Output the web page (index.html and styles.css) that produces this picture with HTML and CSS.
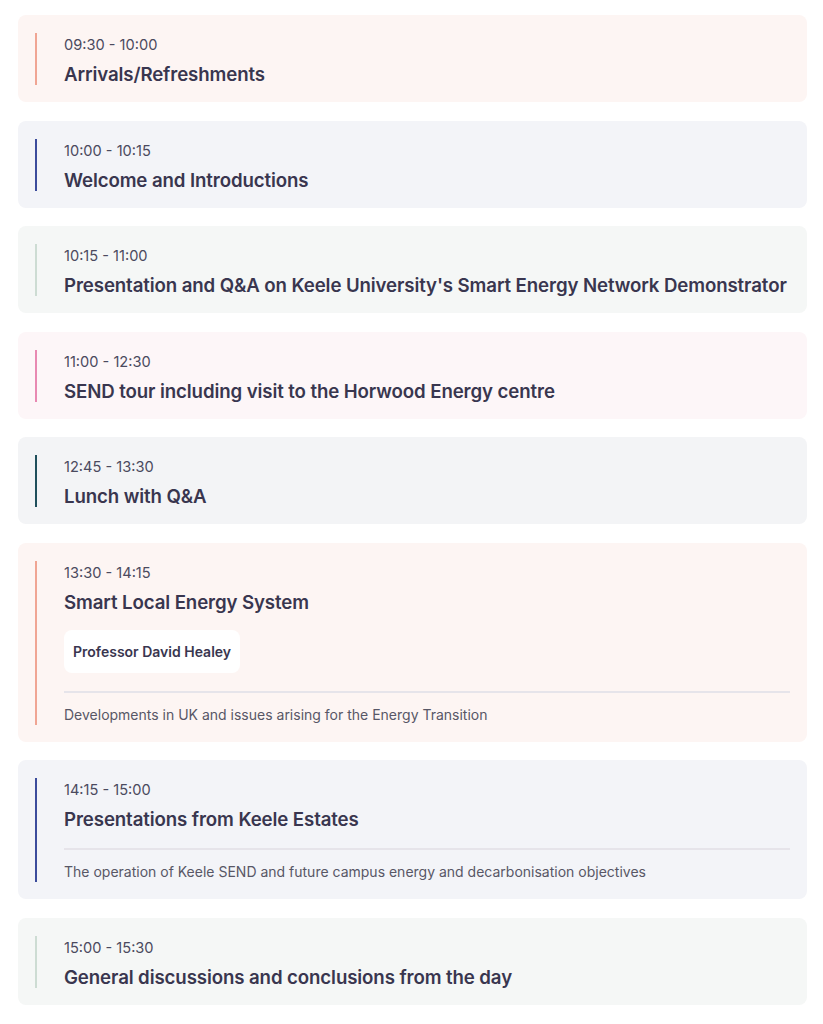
FILE: index.html
```html
<!DOCTYPE html>
<html lang="en">
<head>
<meta charset="utf-8">
<title>Agenda</title>
<link rel="stylesheet" href="styles.css">
</head>
<body>
<main class="agenda">
  <section class="slot slot--salmon">
    <div class="slot__inner">
      <p class="slot__time">09:30 - 10:00</p>
      <h3 class="slot__title">Arrivals/Refreshments</h3>
    </div>
  </section>
  <section class="slot slot--navy">
    <div class="slot__inner">
      <p class="slot__time">10:00 - 10:15</p>
      <h3 class="slot__title">Welcome and Introductions</h3>
    </div>
  </section>
  <section class="slot slot--sage">
    <div class="slot__inner">
      <p class="slot__time">10:15 - 11:00</p>
      <h3 class="slot__title">Presentation and Q&amp;A on Keele University's Smart Energy Network Demonstrator</h3>
    </div>
  </section>
  <section class="slot slot--pink">
    <div class="slot__inner">
      <p class="slot__time">11:00 - 12:30</p>
      <h3 class="slot__title">SEND tour including visit to the Horwood Energy centre</h3>
    </div>
  </section>
  <section class="slot slot--teal">
    <div class="slot__inner">
      <p class="slot__time">12:45 - 13:30</p>
      <h3 class="slot__title">Lunch with Q&amp;A</h3>
    </div>
  </section>
  <section class="slot slot--salmon">
    <div class="slot__inner">
      <p class="slot__time">13:30 - 14:15</p>
      <h3 class="slot__title">Smart Local Energy System</h3>
      <div class="slot__speakers"><span class="speaker">Professor David Healey</span></div>
      <p class="slot__desc">Developments in UK and issues arising for the Energy Transition</p>
    </div>
  </section>
  <section class="slot slot--navy">
    <div class="slot__inner">
      <p class="slot__time">14:15 - 15:00</p>
      <h3 class="slot__title">Presentations from Keele Estates</h3>
      <p class="slot__desc">The operation of Keele SEND and future campus energy and decarbonisation objectives</p>
    </div>
  </section>
  <section class="slot slot--sage">
    <div class="slot__inner">
      <p class="slot__time">15:00 - 15:30</p>
      <h3 class="slot__title">General discussions and conclusions from the day</h3>
    </div>
  </section>
</main>
</body>
</html>
```

FILE: styles.css
```css
* { box-sizing: border-box; }
html, body { margin: 0; padding: 0; background: #ffffff; }
body {
  font-family: Inter, "Noto Sans", "Liberation Sans", sans-serif;
  color: #39364f;
}
.agenda {
  display: flex;
  flex-direction: column;
  gap: 18.5px;
  padding: 15px 16px 0 18px;
}
.slot {
  border-radius: 8px;
  padding: 18px 17px 17px 17px;
}
.slot__inner {
  border-left: 2px solid;
  padding-left: 27px;
  display: flex;
  flex-direction: column;
}
.slot__time {
  margin: 2px 0 0;
  font-size: 14.6px;
  line-height: 20px;
  font-weight: 400;
  color: #4b4a5e;
}
.slot__title {
  margin: 8px 0 0;
  font-size: 18.65px;
  line-height: 22px;
  font-weight: 600;
  color: #39364f;
  letter-spacing: -0.1px;
}
.slot__speakers {
  margin-top: 17px;
  display: flex;
}
.speaker {
  background: #ffffff;
  border-radius: 8px;
  padding: 12px 9px;
  font-size: 14px;
  line-height: 19px;
  font-weight: 600;
  color: #39364f;
}
.slot__desc {
  margin: 18px 0 0;
  padding-top: 12px;
  border-top: 2px solid #e6e4ea;
  font-size: 14px;
  line-height: 20px;
  color: #585766;
}
.slot--salmon { background: #fdf5f3; }
.slot--salmon .slot__inner { border-color: #f0a593; }
.slot--navy { background: #f3f4f8; }
.slot--navy .slot__inner { border-color: #3c4c9c; }
.slot--sage { background: #f5f7f6; }
.slot--sage .slot__inner { border-color: #cddcd3; }
.slot--pink { background: #fdf6f8; }
.slot--pink .slot__inner { border-color: #e889b2; }
.slot--teal { background: #f3f4f6; }
.slot--teal .slot__inner { border-color: #1f4f5c; }
```
